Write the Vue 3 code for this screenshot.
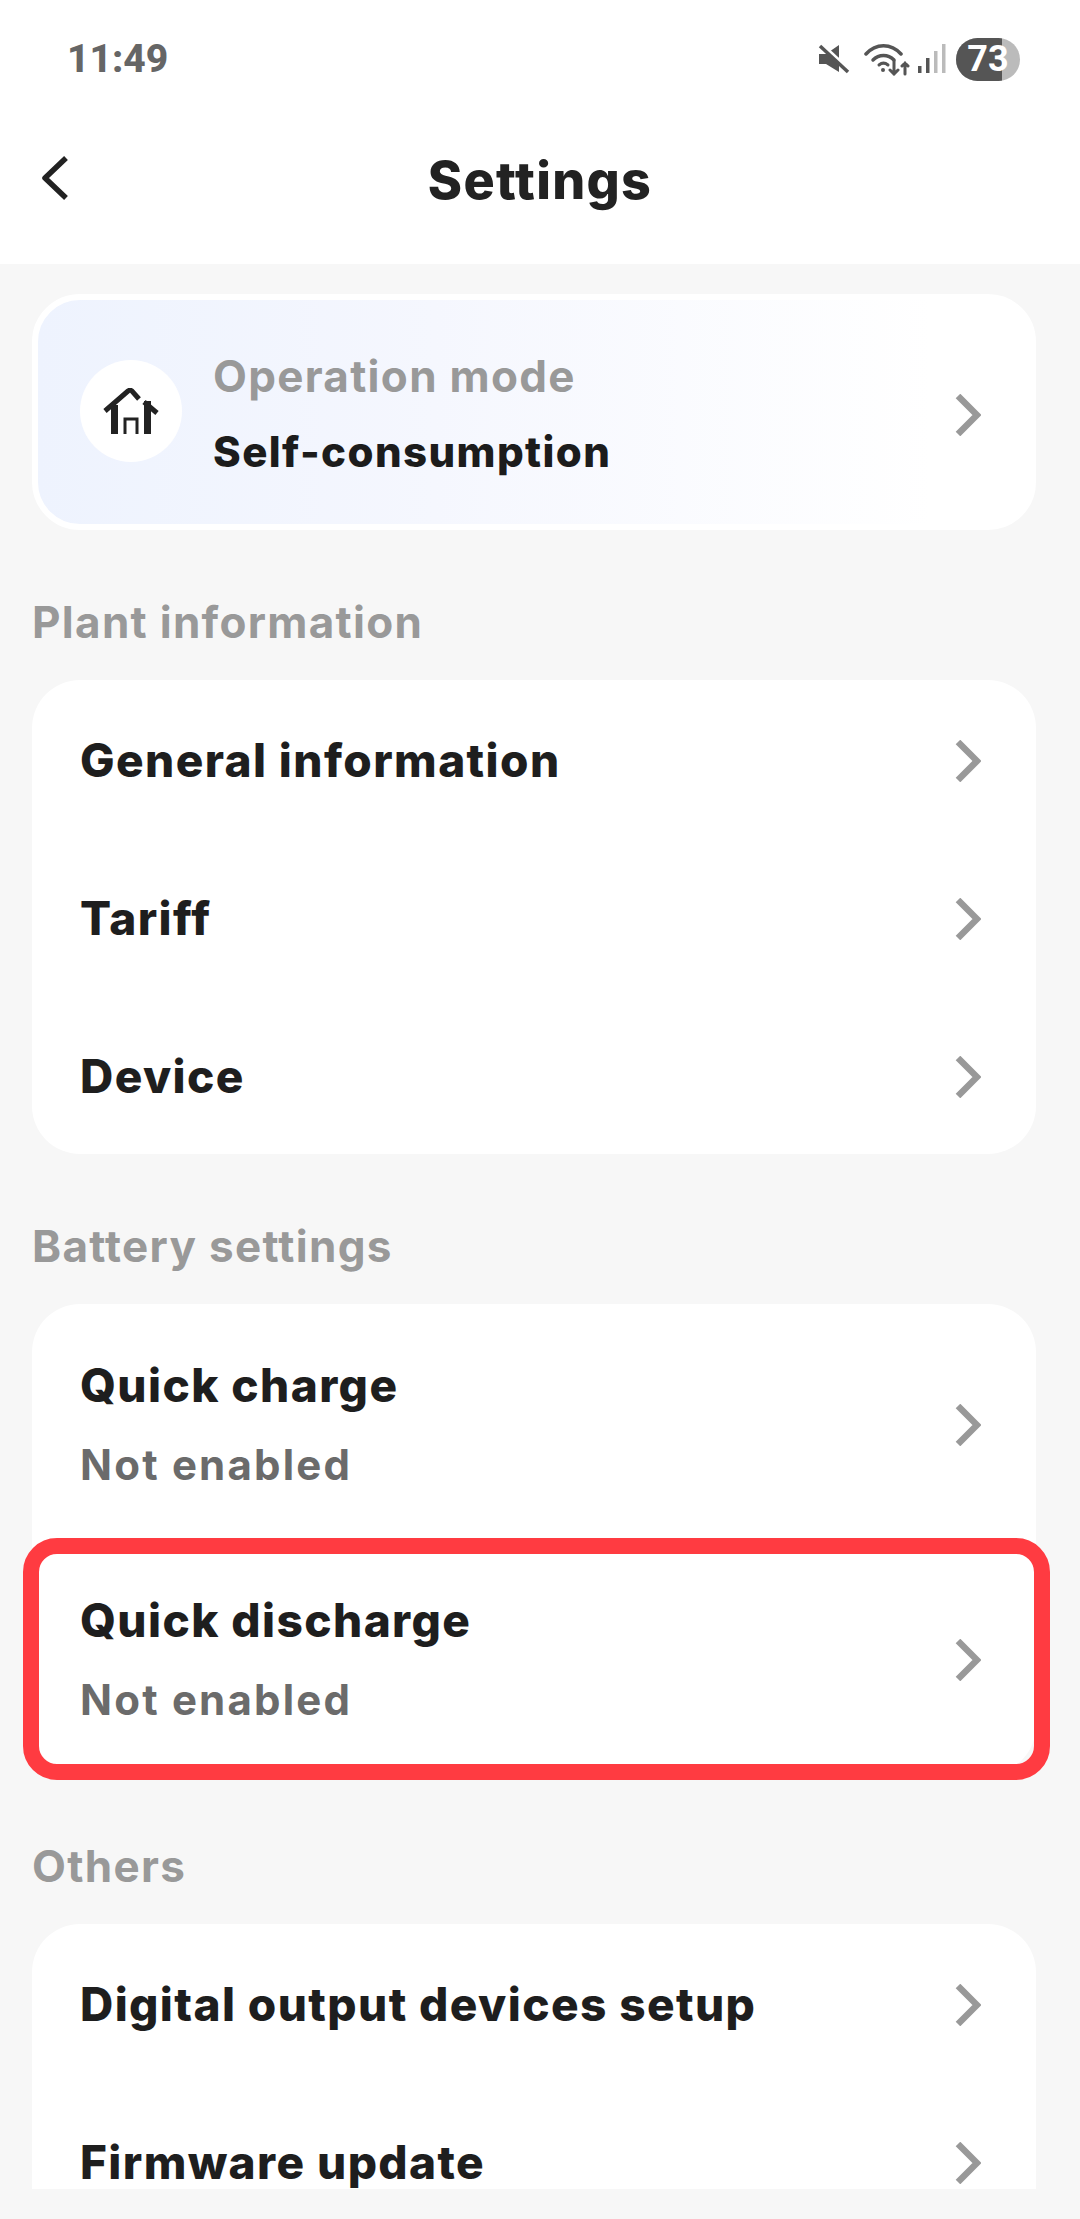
<template>
  <div class="page">
    <header class="top">
      <div class="status">
        <span class="time">11:49</span>
        <div class="status-icons">
          <svg class="ic-mute" width="32" height="30" viewBox="0 0 32 30">
            <path d="M1 10h7L21 1v27L8 20H1z" fill="#555" />
            <path d="M2 -1l28 26" stroke="#fff" stroke-width="4" />
            <path d="M2 2l28 26" stroke="#555" stroke-width="3.500" />
          </svg>
          <svg class="ic-wifi" width="46" height="33" viewBox="0 0 46 33" fill="none" stroke="#555" stroke-linecap="round">
            <path d="M2 11C12 0 27 0 37 11" stroke-width="3.500" />
            <path d="M9 17c6-6 15-6 21 0" stroke-width="3.500" />
            <path d="M15 22c3-2.500 6-2.500 9 0" stroke-width="3" />
            <circle cx="19" cy="27" r="2" fill="#555" stroke="none" />
            <path d="M30 18v13M26 27l4 4 4-4" stroke-width="3" />
            <path d="M41 31V20M38 23l3-3 3 3" stroke-width="3" />
          </svg>
          <svg class="ic-signal" width="28" height="30" viewBox="0 0 28 30">
            <rect x="0" y="22" width="3.500" height="7" fill="#555" />
            <rect x="8" y="14" width="3.500" height="15" fill="#555" />
            <rect x="16" y="7" width="3.500" height="22" fill="#bbb" />
            <rect x="24" y="0" width="3.500" height="29" fill="#bbb" />
          </svg>
          <div class="battery">
            <div class="battery-fill"></div>
            <span class="battery-num">73</span>
          </div>
        </div>
      </div>
      <div class="nav">
        <svg class="back" width="28" height="46" viewBox="0 0 28 46" fill="none">
          <path d="M25 3L4 23l21 20" stroke="#222" stroke-width="5.500" stroke-linejoin="round" />
        </svg>
        <h1 class="title">Settings</h1>
      </div>
    </header>

    <main class="scroll">
      <div class="mode-card">
        <div class="mode-icon">
          <svg width="56" height="46" viewBox="0 0 56 46" fill="none" stroke="#222">
            <path d="M2 23L25 3q2-1.500 4 0l7 8" stroke-width="5" />
            <path d="M41 14l13 11" stroke-width="5" />
            <path d="M11.500 17v29M44.500 13v33" stroke-width="7" />
            <path d="M22 46V31h12v15" stroke-width="3" />
          </svg>
        </div>
        <div class="mode-text">
          <div class="mode-label">Operation mode</div>
          <div class="mode-value">Self-consumption</div>
        </div>
        <svg class="chev" width="26" height="42" viewBox="0 0 26 42" fill="none">
          <path d="M3 2l19 19L3 40" stroke="#999" stroke-width="6.500" />
        </svg>
      </div>

      <section v-for="group in groups" :key="group.name">
        <h2 class="group-name">{{ group.name }}</h2>
        <div class="card">
          <div
            v-for="row in group.rows"
            :key="row.title"
            class="row"
            :class="{ tall: row.sub }"
          >
            <div class="row-text">
              <div class="row-title">{{ row.title }}</div>
              <div v-if="row.sub" class="row-sub">{{ row.sub }}</div>
            </div>
            <svg class="chev" width="26" height="42" viewBox="0 0 26 42" fill="none">
              <path d="M3 2l19 19L3 40" stroke="#999" stroke-width="6.500" />
            </svg>
            <div v-if="row.marked" class="mark"></div>
          </div>
        </div>
      </section>
    </main>
  </div>
</template>

<script setup>
const groups = [
  {
    name: 'Plant information',
    rows: [
      { title: 'General information' },
      { title: 'Tariff' },
      { title: 'Device' }
    ]
  },
  {
    name: 'Battery settings',
    rows: [
      { title: 'Quick charge', sub: 'Not enabled' },
      { title: 'Quick discharge', sub: 'Not enabled', marked: true }
    ]
  },
  {
    name: 'Others',
    rows: [
      { title: 'Digital output devices setup' },
      { title: 'Firmware update' }
    ]
  }
]
</script>

<style>
body {
  background: #f7f7f7;
}
</style>

<style scoped>
.page {
  height: 2219px;
  background: #f7f7f7;
  font-family: Inter, "Liberation Sans", sans-serif;
  overflow: hidden;
}

.top {
  height: 264px;
  background: #fff;
}

.status {
  height: 118px;
  display: flex;
  justify-content: space-between;
  align-items: center;
  padding: 0 60px 0 67px;
}

.time {
  font-family: Roboto, sans-serif;
  font-weight: 800;
  font-size: 39px;
  color: #666;
}

.status-icons {
  display: flex;
  align-items: center;
}

.ic-mute {
  margin-right: 14px;
}

.ic-wifi {
  margin-right: 8px;
}

.ic-signal {
  margin-right: 10px;
}

.battery {
  position: relative;
  width: 64px;
  height: 43px;
  border-radius: 22px;
  background: #bbb;
  overflow: hidden;
  display: flex;
  align-items: center;
  justify-content: center;
}

.battery-fill {
  position: absolute;
  left: 0;
  top: 0;
  bottom: 0;
  width: 46px;
  background: #555;
}

.battery-num {
  position: relative;
  font-family: Roboto, sans-serif;
  font-weight: 700;
  font-size: 36px;
  color: #fff;
}

.nav {
  position: relative;
  height: 128px;
  display: flex;
  align-items: center;
  justify-content: center;
}

.back {
  position: absolute;
  left: 41px;
  top: 37px;
}

.title {
  margin: 0 0 4px;
  font-size: 52px;
  font-weight: 800;
  color: #222;
  letter-spacing: 1.3px;
}

.scroll {
  box-sizing: border-box;
  height: 1925px;
  overflow: hidden;
  padding: 30px 44px 0 32px;
}

.mode-card {
  border: 6px solid #fff;
  border-radius: 48px;
  background: linear-gradient(90deg, #eef3fe 0%, #f5f7fe 40%, #fff 90%);
  display: flex;
  align-items: center;
  padding: 4px 49px 0 42px;
  height: 220px;
}

.mode-icon {
  width: 102px;
  height: 102px;
  border-radius: 50%;
  background: #fff;
  display: flex;
  align-items: center;
  justify-content: center;
  margin: 0 31px 6px 0;
  flex: none;
}

.mode-text {
  flex: 1;
}

.mode-label {
  font-size: 44px;
  font-weight: 700;
  color: #999;
  letter-spacing: 1.3px;
  margin-bottom: 26px;
  line-height: 50px;
}

.mode-value {
  font-size: 42px;
  font-weight: 800;
  color: #1c1c1c;
  letter-spacing: 1.4px;
  line-height: 50px;
}

.group-name {
  margin: 0;
  height: 150px;
  padding-top: 66px;
  box-sizing: border-box;
  line-height: 52px;
  font-size: 44px;
  font-weight: 700;
  color: #999;
  letter-spacing: 1.3px;
}

.card {
  background: #fff;
  border-radius: 48px;
}

.row {
  box-sizing: border-box;
  position: relative;
  height: 158px;
  display: flex;
  align-items: center;
  justify-content: space-between;
  padding: 2px 55px 0 48px;
}

.row.tall {
  height: 235px;
  padding-top: 4px;
}

.chev {
  margin-top: 2px;
}

.row-title {
  font-size: 46px;
  font-weight: 800;
  color: #1e1e1e;
  letter-spacing: 1.4px;
}

.row-sub {
  margin-top: 26px;
  font-size: 42px;
  font-weight: 700;
  color: #6b6b6b;
  letter-spacing: 2.2px;
}

.mark {
  position: absolute;
  inset: -1px -14px -6px -9px;
  border: 16px solid #ff3b41;
  border-radius: 34px;
  pointer-events: none;
}
</style>
